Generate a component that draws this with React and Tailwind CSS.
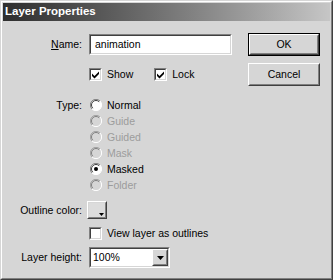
import React from "react";

const font = { fontFamily: '"Liberation Sans", Arial, sans-serif' };

function Sunken({ className = "", innerClassName = "", children }) {
  return (
    <div className={`border border-t-[#808080] border-l-[#808080] border-b-white border-r-white ${className}`}>
      <div className={`h-full w-full border border-t-[#404040] border-l-[#404040] border-b-[#d6d6d6] border-r-[#d6d6d6] ${innerClassName}`}>
        {children}
      </div>
    </div>
  );
}

function Raised({ className = "", innerClassName = "", children }) {
  return (
    <div className={`border border-t-white border-l-white border-b-[#404040] border-r-[#404040] ${className}`}>
      <div className={`h-full w-full border border-t-[#d6d6d6] border-l-[#d6d6d6] border-b-[#808080] border-r-[#808080] ${innerClassName}`}>
        {children}
      </div>
    </div>
  );
}

function Checkbox({ checked, label }) {
  return (
    <div className="flex items-center">
      <Sunken className="h-[13px] w-[13px]" innerClassName="bg-white flex items-center justify-center">
        {checked && (
          <svg width="9" height="9" viewBox="0 0 9 9">
            <path d="M1 3.5 L3.5 6 L8 1.5 L8 4 L3.5 8.5 L1 6 Z" fill="#000" />
          </svg>
        )}
      </Sunken>
      <span className="ml-[5px] leading-none">{label}</span>
    </div>
  );
}

function Radio({ label, checked, disabled }) {
  return (
    <div className="flex h-[16px] items-center">
      <svg width="12" height="12" viewBox="0 0 12 12" className="ml-[1px]">
        <circle cx="6" cy="6" r="5.5" fill={disabled ? "#d6d6d6" : "#fff"} />
        <path d="M10 2 A5.5 5.5 0 0 0 2 10" stroke={disabled ? "#a0a0a0" : "#808080"} strokeWidth="1" fill="none" />
        <path d="M9.2 2.8 A4.5 4.5 0 0 0 2.8 9.2" stroke={disabled ? "#808080" : "#404040"} strokeWidth="1" fill="none" />
        <path d="M2 10 A5.5 5.5 0 0 0 10 2" stroke="#fff" strokeWidth="1" fill="none" />
        {checked && <circle cx="6" cy="6" r="2" fill="#000" />}
      </svg>
      <span className={`ml-[5px] leading-none ${disabled ? "text-[#9c9c9c]" : "text-black"}`}>{label}</span>
    </div>
  );
}

function Label({ children }) {
  return <div className="w-[79px] shrink-0 text-right leading-none">{children}</div>;
}

export default function App() {
  return (
    <div className="h-[280px] w-[333px] text-[10.5px] text-black" style={font}>
      <div className="h-full w-full border border-t-[#d6d6d6] border-l-[#d6d6d6] border-b-[#404040] border-r-[#404040]">
        <div className="flex h-full w-full flex-col border border-t-white border-l-white border-b-[#808080] border-r-[#808080] bg-[#d6d6d6] p-px">
          {/* Title bar */}
          <div className="flex h-[18px] shrink-0 items-center bg-gradient-to-r from-[#2e2e2e] to-[#c6c6c6] pl-[2px]">
            <span className="text-[11.5px] font-bold leading-none text-white">Layer Properties</span>
          </div>

          {/* Body */}
          <div className="flex flex-1">
            <div className="w-[245px] shrink-0">
              <div className="mt-[13px] flex items-center">
                <Label>
                  <span className="underline">N</span>ame:
                </Label>
                <Sunken className="ml-[7px] h-[21px] w-[143px]" innerClassName="bg-white flex items-center pl-[4px]">
                  <span className="leading-none">animation</span>
                </Sunken>
              </div>

              <div className="ml-[86px] mt-[13px] flex items-center">
                <Checkbox checked label="Show" />
                <div className="ml-[21px]">
                  <Checkbox checked label="Lock" />
                </div>
              </div>

              <div className="mt-[16px] flex">
                <Label>
                  <div className="flex h-[16px] items-center justify-end">Type:</div>
                </Label>
                <div className="ml-[7px] flex flex-col">
                  <Radio label="Normal" />
                  <Radio label="Guide" disabled />
                  <Radio label="Guided" disabled />
                  <Radio label="Mask" disabled />
                  <Radio label="Masked" checked />
                  <Radio label="Folder" disabled />
                </div>
              </div>

              <div className="mt-[8px] flex items-center">
                <Label>Outline color:</Label>
                <Raised className="ml-[5px] h-[18px] w-[20px]" innerClassName="relative bg-[#dcdcdc]">
                  <svg width="5" height="3" viewBox="0 0 5 3" className="absolute bottom-[1px] right-[1px]">
                    <path d="M0 0 H5 L2.5 3 Z" fill="#000" />
                  </svg>
                </Raised>
              </div>

              <div className="ml-[86px] mt-[8px]">
                <Checkbox label="View layer as outlines" />
              </div>

              <div className="mt-[7px] flex items-center">
                <Label>Layer height:</Label>
                <Sunken className="ml-[7px] h-[21px] w-[81px]" innerClassName="bg-white flex items-center justify-between">
                  <span className="pl-[2px] leading-none">100%</span>
                  <Raised className="h-full w-[16px]" innerClassName="flex items-center justify-center bg-[#d6d6d6]">
                    <svg width="7" height="4" viewBox="0 0 7 4">
                      <path d="M0 0 H7 L3.5 4 Z" fill="#000" />
                    </svg>
                  </Raised>
                </Sunken>
              </div>
            </div>

            <div className="flex flex-col">
              <div className="mt-[12px] h-[23px] w-[72px] border border-black">
                <Raised className="h-full w-full" innerClassName="flex items-center justify-center">
                  <span className="leading-none">OK</span>
                </Raised>
              </div>
              <Raised className="mt-[7px] h-[23px] w-[72px]" innerClassName="flex items-center justify-center">
                <span className="leading-none">Cancel</span>
              </Raised>
            </div>
          </div>
        </div>
      </div>
    </div>
  );
}
